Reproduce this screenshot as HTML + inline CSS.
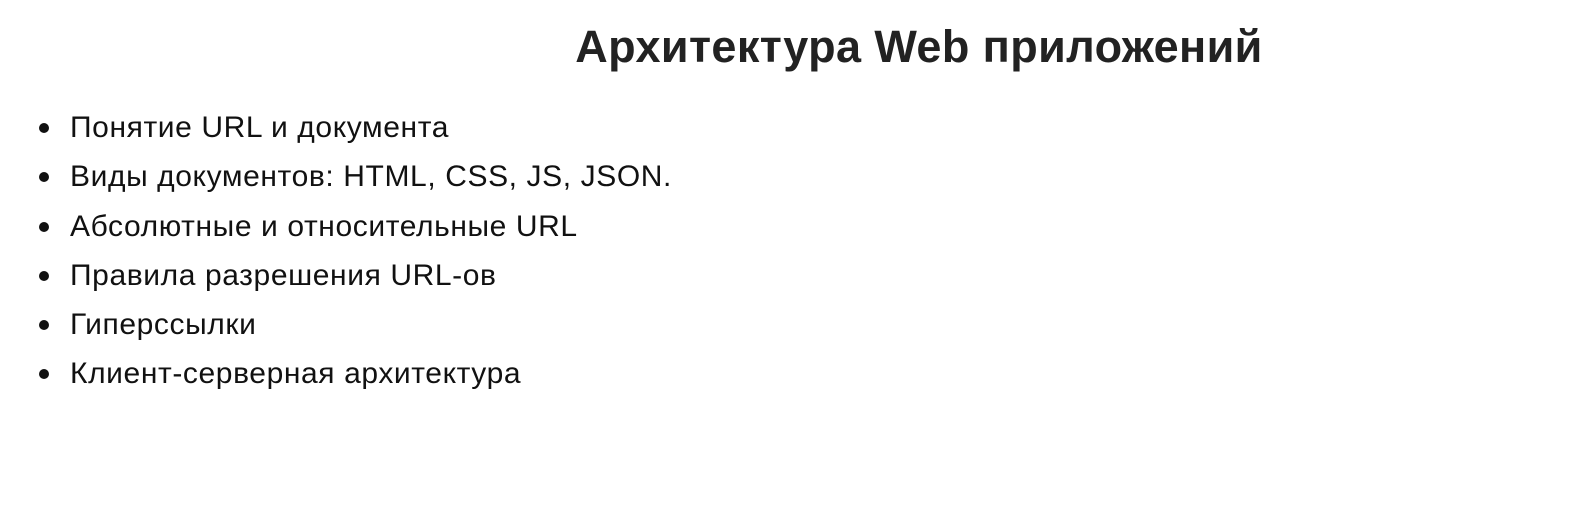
<!DOCTYPE html>
<html><head><meta charset="utf-8"><style>
body{margin:0;width:1584px;height:514px;background:#fff;font-family:"Liberation Sans",sans-serif;color:#111;position:relative;overflow:hidden}
h1{position:absolute;left:0;width:1838px;top:21px;margin:0;text-align:center;font-size:45px;font-weight:bold;color:#222;line-height:52px;letter-spacing:0.4px}
ul{position:absolute;left:0;top:103px;margin:0;padding:0;list-style:none}
li{position:relative;padding-left:70px;font-size:30px;line-height:49.3px;height:49.3px;letter-spacing:0.6px}
li:before{content:"";position:absolute;left:39px;top:20px;width:10px;height:10px;border-radius:50%;background:#111}
</style></head><body>
<h1>Архитектура Web приложений</h1>
<ul>
<li>Понятие URL и документа</li>
<li>Виды документов: HTML, CSS, JS, JSON.</li>
<li>Абсолютные и относительные URL</li>
<li>Правила разрешения URL-ов</li>
<li>Гиперссылки</li>
<li>Клиент-серверная архитектура</li>
</ul>
</body></html>
